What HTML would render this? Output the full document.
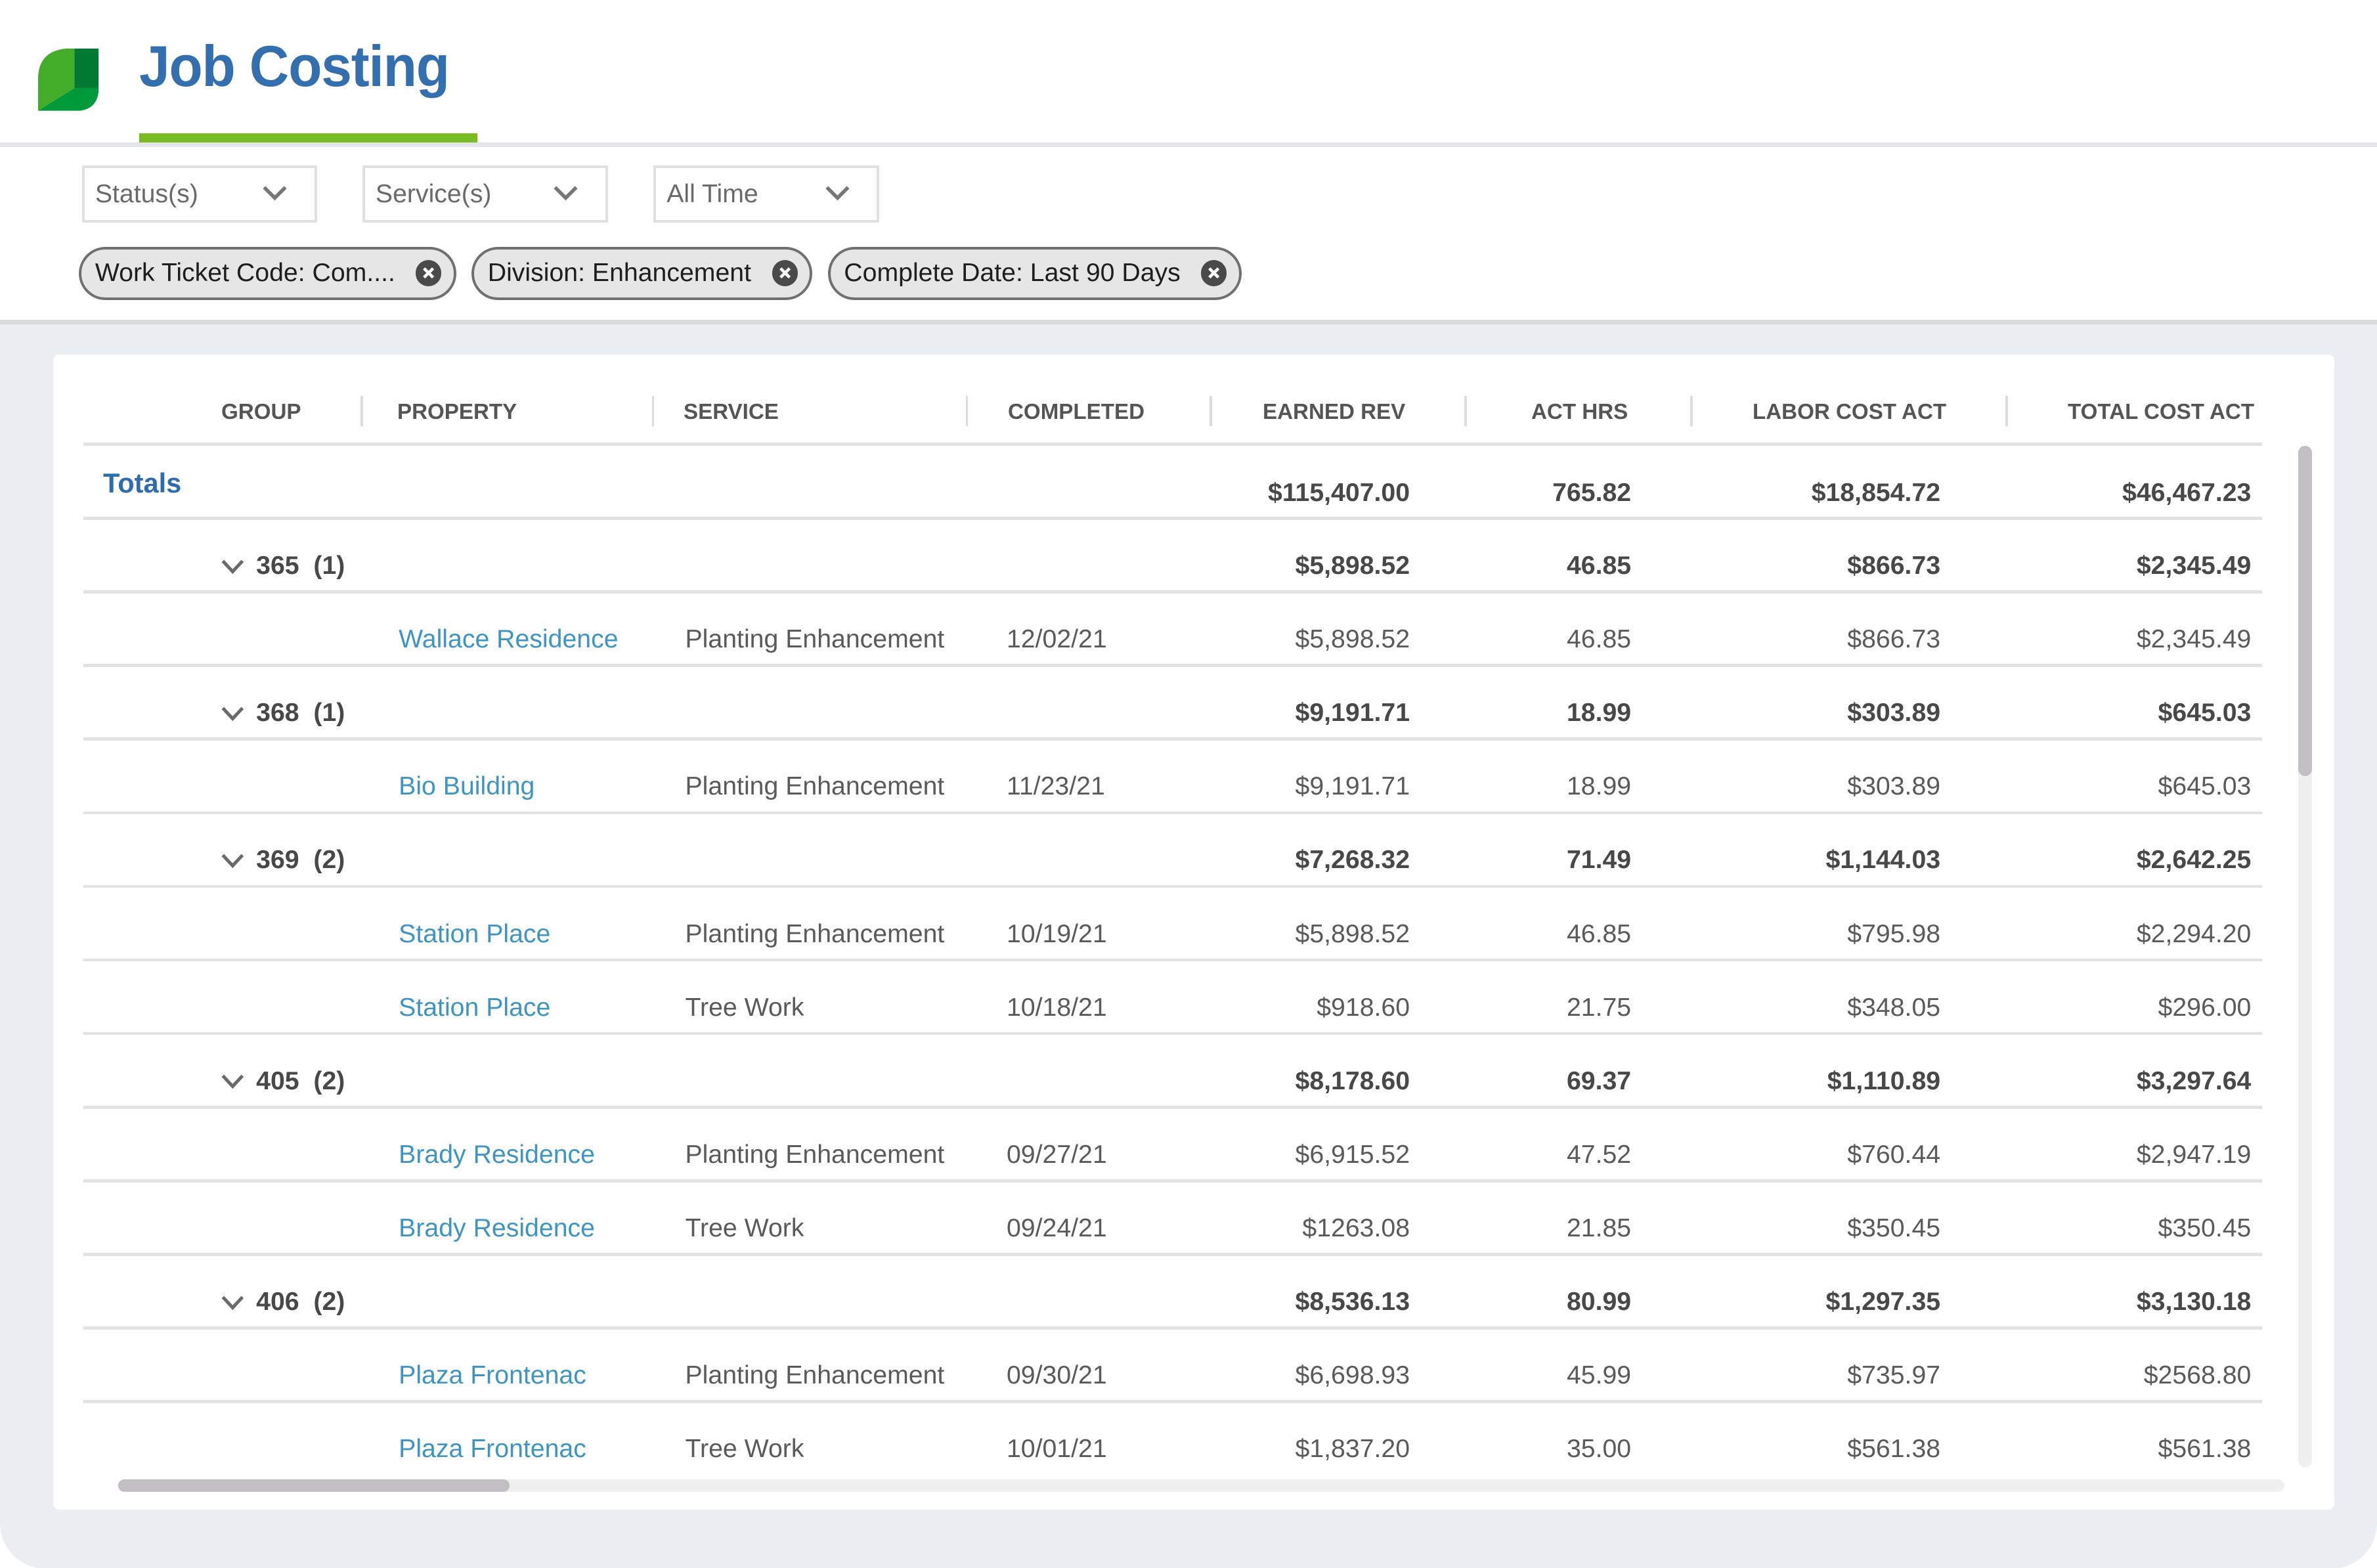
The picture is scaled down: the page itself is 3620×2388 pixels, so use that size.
<!DOCTYPE html>
<html><head><meta charset="utf-8">
<style>
*{margin:0;padding:0;box-sizing:border-box}
html,body{width:3620px;height:2388px;overflow:hidden;background:#fff}
#w{position:relative;width:1568px;height:1035px;zoom:2.30867;font-family:"Liberation Sans",Arial,sans-serif;}
.a{position:absolute}
.dd{position:absolute;top:109px;height:38px;border:2px solid #e0e0e2;background:#fff;color:#6a6a6a;font-size:17px;line-height:34px;padding-left:7px}
.dd svg{position:absolute;right:18px;top:12px}
.chip{position:absolute;top:163px;height:35px;border:2px solid #707070;background:#e6e6e6;border-radius:18px;color:#1e1e1e;font-size:17px;line-height:31px;padding-left:9px}
.chip .x{position:absolute;right:8px;top:7px;width:17px;height:17px;border-radius:50%;background:#4a4a4a;display:block}
.chip .x svg{display:block}
.hd{position:absolute;top:262px;font-size:14.5px;color:#555;line-height:20px;font-weight:bold;transform:scaleX(.99);transform-origin:left}
.sep{position:absolute;top:261px;width:1.5px;height:20px;background:#dcdcdc}
.ln{position:absolute;left:55px;width:1437px;height:2px;background:#e2e2e2}
.t{position:absolute;font-size:17px;line-height:20px;color:#5a5a5a;white-space:nowrap}
.r{text-align:right}
.b{font-weight:bold;color:#484848}
.lk{color:#3e94c3}
</style></head><body>
<div id="w">
<svg class="a" style="left:25px;top:32px" width="40" height="41" viewBox="0 0 40 41">
<path d="M0 41 L0 20 Q0 2 18 0 L24 0 L24 26 Z" fill="#43ad2a"/>
<path d="M24 0 L40 0 L40 26 L24 26 Z" fill="#007a33"/>
<path d="M0 41 L24 26 L40 26 Q40 39 28 41 Z" fill="#009a3a"/>
</svg>
<div class="a" style="left:92px;top:22px;font-size:38px;font-weight:bold;color:#336fae;letter-spacing:-0.5px;transform:scaleX(.955);transform-origin:left">Job Costing</div>
<div class="a" style="left:92px;top:88px;width:223px;height:6px;background:#78bc22"></div>
<div class="a" style="left:0;top:94px;width:1568px;height:3px;background:#e5e6ea"></div>

<div class="dd" style="left:54px;width:155px">Status(s)<svg width="16" height="10"><path d="M1 1 L8 8 L15 1" stroke="#777" stroke-width="2.4" fill="none"/></svg></div>
<div class="dd" style="left:239px;width:162px">Service(s)<svg width="16" height="10"><path d="M1 1 L8 8 L15 1" stroke="#777" stroke-width="2.4" fill="none"/></svg></div>
<div class="dd" style="left:431px;width:149px">All Time<svg width="16" height="10"><path d="M1 1 L8 8 L15 1" stroke="#777" stroke-width="2.4" fill="none"/></svg></div>

<div class="chip" style="left:52px;width:249px">Work Ticket Code: Com....<span class="x"><svg width="17" height="17"><path d="M5.5 5.5L11.5 11.5M11.5 5.5L5.5 11.5" stroke="#fff" stroke-width="2"/></svg></span></div>
<div class="chip" style="left:311px;width:225px">Division: Enhancement<span class="x"><svg width="17" height="17"><path d="M5.5 5.5L11.5 11.5M11.5 5.5L5.5 11.5" stroke="#fff" stroke-width="2"/></svg></span></div>
<div class="chip" style="left:546px;width:273px">Complete Date: Last 90 Days<span class="x"><svg width="17" height="17"><path d="M5.5 5.5L11.5 11.5M11.5 5.5L5.5 11.5" stroke="#fff" stroke-width="2"/></svg></span></div>

<div class="a" style="left:0;top:211px;width:1568px;height:3px;background:#d8dade"></div>
<div class="a" style="left:0;top:214px;width:1568px;height:821px;background:#eaeef3;border-radius:0 0 30px 30px"></div>
<div class="a" style="left:35px;top:234px;width:1505px;height:762px;background:#fff;border-radius:4px"></div>

<div class="hd" style="left:146px">GROUP</div>
<div class="hd" style="left:262px">PROPERTY</div>
<div class="hd" style="left:451px">SERVICE</div>
<div class="hd" style="left:665px">COMPLETED</div>
<div class="hd" style="left:833px">EARNED REV</div>
<div class="hd" style="left:1010px">ACT HRS</div>
<div class="hd" style="left:1156px">LABOR COST ACT</div>
<div class="hd" style="left:1364px">TOTAL COST ACT</div>
<div class="sep" style="left:238px"></div><div class="sep" style="left:430px"></div><div class="sep" style="left:637px"></div><div class="sep" style="left:798px"></div><div class="sep" style="left:966px"></div><div class="sep" style="left:1115px"></div><div class="sep" style="left:1323px"></div>

<div class="ln" style="top:292px"></div>
<div class="t" style="left:68px;top:309px;color:#2f6cae;font-weight:bold;font-size:18px">Totals</div>
<div class="t r b" style="right:638px;top:315px">$115,407.00</div>
<div class="t r b" style="right:492px;top:315px">765.82</div>
<div class="t r b" style="right:288px;top:315px">$18,854.72</div>
<div class="t r b" style="right:83px;top:315px">$46,467.23</div>

<div id="rows"></div>
<script>
var rows=[
['g','365','(1)','$5,898.52','46.85','$866.73','$2,345.49'],
['d','Wallace Residence','Planting Enhancement','12/02/21','$5,898.52','46.85','$866.73','$2,345.49'],
['g','368','(1)','$9,191.71','18.99','$303.89','$645.03'],
['d','Bio Building','Planting Enhancement','11/23/21','$9,191.71','18.99','$303.89','$645.03'],
['g','369','(2)','$7,268.32','71.49','$1,144.03','$2,642.25'],
['d','Station Place','Planting Enhancement','10/19/21','$5,898.52','46.85','$795.98','$2,294.20'],
['d','Station Place','Tree Work','10/18/21','$918.60','21.75','$348.05','$296.00'],
['g','405','(2)','$8,178.60','69.37','$1,110.89','$3,297.64'],
['d','Brady Residence','Planting Enhancement','09/27/21','$6,915.52','47.52','$760.44','$2,947.19'],
['d','Brady Residence','Tree Work','09/24/21','$1263.08','21.85','$350.45','$350.45'],
['g','406','(2)','$8,536.13','80.99','$1,297.35','$3,130.18'],
['d','Plaza Frontenac','Planting Enhancement','09/30/21','$6,698.93','45.99','$735.97','$2568.80'],
['d','Plaza Frontenac','Tree Work','10/01/21','$1,837.20','35.00','$561.38','$561.38']];
var h='';
rows.forEach(function(r,i){
 var ly=341+i*48.55, ty=ly+22;
 h+='<div class="ln" style="top:'+ly.toFixed(1)+'px"></div>';
 var n;
 if(r[0]=='g'){
  h+='<svg class="a" style="left:146px;top:'+(ty+6).toFixed(1)+'px" width="15" height="10"><path d="M1 1L7.5 8L14 1" stroke="#6a6a6a" stroke-width="2.2" fill="none"/></svg>';
  h+='<div class="t b" style="left:169px;top:'+ty.toFixed(1)+'px">'+r[1]+'&nbsp; '+r[2]+'</div>';
  n=r.slice(3);
 } else {
  h+='<div class="t lk" style="left:263px;top:'+ty.toFixed(1)+'px">'+r[1]+'</div>';
  h+='<div class="t" style="left:452px;top:'+ty.toFixed(1)+'px">'+r[2]+'</div>';
  h+='<div class="t" style="left:664px;top:'+ty.toFixed(1)+'px">'+r[3]+'</div>';
  n=r.slice(4);
 }
 var c=r[0]=='g'?' b':'';
 [638,492,288,83].forEach(function(rt,k){h+='<div class="t r'+c+'" style="right:'+rt+'px;top:'+ty.toFixed(1)+'px">'+n[k]+'</div>';});
});
document.getElementById('rows').innerHTML=h;
</script>
<div class="a" style="left:1516px;top:294px;width:9px;height:674px;background:#f0f0f0;border-radius:5px"></div>
<div class="a" style="left:1516px;top:294px;width:9px;height:218px;background:#c1bfc1;border-radius:5px"></div>
<div class="a" style="left:78px;top:976px;width:1429px;height:8px;background:#f0f0f0;border-radius:4px"></div>
<div class="a" style="left:78px;top:976px;width:258px;height:8px;background:#c1bfc1;border-radius:4px"></div>
</div>
</body></html>
